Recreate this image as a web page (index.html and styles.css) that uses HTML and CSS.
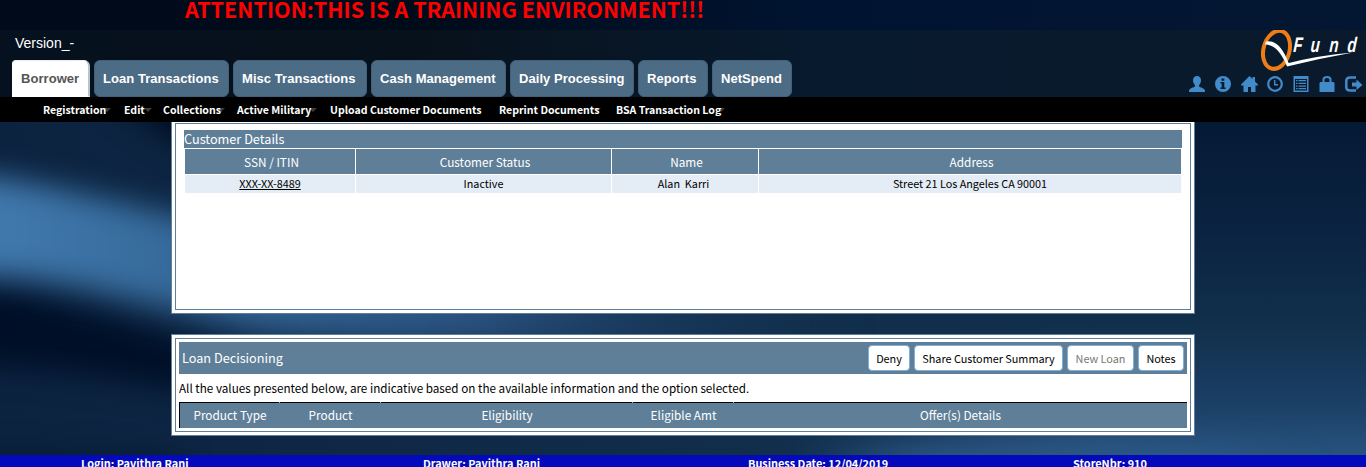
FILE: index.html
```html
<!DOCTYPE html>
<html lang="en">
<head>
<meta charset="utf-8">
<title>QFund</title>
<link rel="stylesheet" href="styles.css">
</head>
<body>
<svg class="backdrop" viewBox="0 0 1366 467" preserveAspectRatio="none" aria-hidden="true">
  <defs>
    <linearGradient id="base" x1="0" y1="0" x2="0" y2="1">
      <stop offset="0" stop-color="#021026"/><stop offset=".28" stop-color="#051a35"/>
      <stop offset=".5" stop-color="#0b2342"/><stop offset=".7" stop-color="#11304c"/>
      <stop offset=".85" stop-color="#1a3d63"/><stop offset="1" stop-color="#2a5784"/>
    </linearGradient>
    <linearGradient id="left" x1="0" y1="0" x2="1" y2="0">
      <stop offset="0" stop-color="#0c2340"/><stop offset=".7" stop-color="#112e4b"/><stop offset="1" stop-color="#112e4b" stop-opacity="0"/>
    </linearGradient>
    <linearGradient id="beam" gradientUnits="userSpaceOnUse" x1="0" y1="0" x2="860" y2="0">
      <stop offset="0" stop-color="#4079ad"/><stop offset=".2" stop-color="#366a9b"/>
      <stop offset=".55" stop-color="#2a527f"/><stop offset="1" stop-color="#16385c" stop-opacity="0"/>
    </linearGradient>
    <filter id="soft" filterUnits="userSpaceOnUse" x="-200" y="-100" width="1800" height="700" color-interpolation-filters="sRGB"><feGaussianBlur stdDeviation="15"/></filter>
    <filter id="wide" filterUnits="userSpaceOnUse" x="-200" y="-100" width="1800" height="700" color-interpolation-filters="sRGB"><feGaussianBlur stdDeviation="30 14"/></filter>
  </defs>
  <rect width="1366" height="467" fill="url(#base)"/>
  <rect y="100" width="1100" height="367" fill="url(#left)"/>
  <path d="M110 95H500V160L190 152Z" fill="#000c20" filter="url(#soft)"/>
  <path d="M-90 285L0 290C70 305 130 325 200 345L260 400L170 388C90 375 40 366 -90 362Z" fill="#000f27" filter="url(#soft)"/>
  <path d="M-90 170L0 178C80 190 220 228 420 270C560 300 720 300 900 300L900 345C600 350 360 345 260 331C150 305 70 280 0 276L-90 272Z" fill="url(#beam)" filter="url(#soft)"/>
  <path d="M-60 458H180V500H-60Z" fill="#03172e" filter="url(#soft)"/>
  <ellipse cx="1060" cy="462" rx="210" ry="20" fill="#2b5683" filter="url(#wide)"/>
</svg>
<div class="page">
  <div class="notice">ATTENTION:THIS IS A TRAINING ENVIRONMENT!!!</div>
  <header class="header">
    <div class="header-left">
      <div class="version">Version_-</div>
      <nav class="tabs">
        <a class="tab tab-active t1">Borrower</a>
        <a class="tab t2">Loan Transactions</a>
        <a class="tab t3">Misc Transactions</a>
        <a class="tab t4">Cash Management</a>
        <a class="tab t5">Daily Processing</a>
        <a class="tab t6">Reports</a>
        <a class="tab t7">NetSpend</a>
      </nav>
    </div>
    <div class="header-right">
      <svg class="logo" viewBox="0 0 105 42">
        <ellipse cx="15.500" cy="19.800" rx="13" ry="19.400" transform="rotate(15 15.500 19.800)" fill="none" stroke="#ef7d17" stroke-width="4"/>
        <path d="M5 11.500C15 9.500 23 20 27.500 33L26 36C20 23 14 14.500 4 14.500Z" fill="#fff"/>
        <path d="M25 31.500L28 33Q57 25.500 92 22.500Q58 28.500 26 36.500Z" fill="#fff"/>
        <text class="logo-text" transform="translate(32 22) skewX(-4) scale(.72 1)" x="0 24 50 75" y="0">Fund</text>
      </svg>
      <div class="icons">
        <svg viewBox="0 0 16 16"><path d="M8 0c2.500 0 4 1.800 4 4.300 0 2.300-1 4-2 5v1.300c1 1 6 1.600 6 4.400v1H0v-1c0-2.800 5-3.400 6-4.400V9.300c-1-1-2-2.700-2-5C4 1.800 5.500 0 8 0Z"/></svg>
        <svg viewBox="0 0 16 16"><path fill-rule="evenodd" d="M8 0a8 8 0 1 1 0 16A8 8 0 0 1 8 0ZM6.500 2.500v2.200h2.800V2.500ZM5.500 6v1.400h1.200V11.500H5.500V13h5v-1.500H9.300V6Z"/></svg>
        <svg class="wide-icon" viewBox="0 0 17 16"><path d="M8.500 0 11.500 3V1h2.500v4.500L17 8.500v1h-2.500V16H10v-5H7v5H2.500V9.500H0v-1Z"/></svg>
        <svg viewBox="0 0 16 16"><circle cx="8" cy="8" r="6.800" fill="none" stroke="#428bca" stroke-width="2.200"/><path d="M7 4h1.400v4H11v1.400H7Z"/></svg>
        <svg viewBox="0 0 16 16"><path fill-rule="evenodd" d="M.5 0h15v16H.5ZM2 3v11.500h12V3Z"/><path d="M3 4h1.500v1.300H3Zm2.500 0H13v1.300H5.500ZM3 6.700h1.500V8H3Zm2.500 0H13V8H5.500ZM3 9.400h1.500v1.300H3Zm2.500 0H13v1.300H5.500ZM3 12h1.500v1.300H3Zm2.500 0H13v1.300H5.500Z"/></svg>
        <svg viewBox="0 0 16 16"><path fill-rule="evenodd" d="M3.500 6V3.500Q3.500 0 8 0t4.500 3.500V6h2.200l.8 1v9H.5V7l.8-1ZM5.500 6h5V3.500Q10.500 2 8 2T5.500 3.500Z"/></svg>
        <svg class="exit-icon" viewBox="0 0 18 16"><path d="M11 1.500H5Q1.300 1.500 1.300 5v6Q1.300 14.500 5 14.500h6" fill="none" stroke="#428bca" stroke-width="2.500"/><path d="M7 6.500h4.500V3.500l6 5.500-6 5v-3.500H7Z"/></svg>
      </div>
    </div>
  </header>
  <nav class="submenu">
    <a class="s1 arrow">Registration</a>
    <a class="s2 arrow">Edit</a>
    <a class="s3 arrow">Collections</a>
    <a class="s4 arrow">Active Military</a>
    <a class="s5">Upload Customer Documents</a>
    <a class="s6 arrow">Reprint Documents</a>
    <a class="s7 arrow">BSA Transaction Log</a>
  </nav>
  <main class="content">
    <section class="card card-customer">
      <div class="card-inner">
        <h2 class="section-title">Customer Details</h2>
        <div class="grid">
          <div class="cell head">SSN / ITIN</div><div class="cell head">Customer Status</div><div class="cell head">Name</div><div class="cell head">Address</div>
          <div class="cell data"><a class="ssn">XXX-XX-8489</a></div><div class="cell data">Inactive</div><div class="cell data name">Alan&nbsp; Karri</div><div class="cell data">Street 21 Los Angeles CA 90001</div>
        </div>
      </div>
    </section>
    <section class="card card-loan">
      <div class="card-inner">
        <div class="loan-bar">
          <h2 class="loan-title">Loan Decisioning</h2>
          <div class="buttons">
            <button class="btn b1">Deny</button><button class="btn b2">Share Customer Summary</button><button class="btn b3" disabled>New Loan</button><button class="btn b4">Notes</button>
          </div>
        </div>
        <p class="hint">All the values presented below, are indicative based on the available information and the option selected.</p>
        <div class="offers">
          <div>Product Type</div><div>Product</div><div>Eligibility</div><div>Eligible Amt</div><div>Offer(s) Details</div>
        </div>
      </div>
    </section>
  </main>
  <footer class="footer">
    <span>Login: Pavithra Rani</span><span>Drawer: Pavithra Rani</span><span>Business Date: 12/04/2019</span><span>StoreNbr: 910</span>
  </footer>
</div>
</body>
</html>
```

FILE: styles.css
```css
* { box-sizing: border-box; }
html, body { margin: 0; height: 467px; overflow: hidden; background: #021026; }
body { font-family: "Noto Sans CJK SC", "Noto Sans", sans-serif; }
.backdrop { position: absolute; left: 0; top: 0; width: 1366px; height: 467px; }
.page { position: relative; width: 1366px; height: 467px; overflow: hidden; display: flex; flex-direction: column; }
h2, p { margin: 0; font-weight: 400; }
.notice { flex: 0 0 30px; padding-left: 185px; font-size: 21.550px; line-height: 18px; font-weight: 700; color: #f00; white-space: nowrap; background: linear-gradient(90deg, #010a1b, #000b19 30%, #001431 60%, #031733); }
.header { flex: 0 0 67px; display: flex; justify-content: space-between; background: linear-gradient(90deg, #06111f, #07111b 30%, #081a2e 60%, #0a1a2c); }
.header-left { padding-left: 12px; font-family: "Liberation Sans", Arial, sans-serif; }
.version { height: 30px; padding-left: 3px; color: #fff; font-size: 14px; line-height: 27px; }
.tabs { display: flex; gap: 4px; }
.tab { height: 37px; border: 1px solid #426079; border-radius: 6px; background: #4c6b85; color: #fff; font-size: 13px; font-weight: 700; line-height: 35px; padding-left: 8px; white-space: nowrap; letter-spacing: .05px; }
.tab-active { background: #fff; color: #555; border-color: #e8edf2 #b5c4d0 #fff #fff; border-right-width: 2px; border-radius: 4px 6px 0 0; }
.t1 { width: 78px; } .t2 { width: 135px; } .t3 { width: 134px; } .t4 { width: 135px; } .t5 { width: 124px; } .t6 { width: 70px; } .t7 { width: 80px; }
.header-right { width: 178px; display: flex; flex-direction: column; align-items: flex-end; }
.logo { width: 105px; height: 42px; display: block; }
.logo-text { fill: #fff; font: italic 700 21px "Liberation Sans", Arial, sans-serif; }
.icons { display: flex; justify-content: space-between; width: 174px; height: 16px; margin: 4px 3px 0 0; }
.icons svg { width: 16px; height: 16px; fill: #428bca; }
.icons .wide-icon { width: 17px; }
.icons .exit-icon { width: 18px; }
.submenu { position: relative; z-index: 0; flex: 0 0 25px; display: flex; background: #000; color: #fff; font-size: 10.550px; line-height: 25px; font-weight: 700; padding-left: 43px; }
.submenu a { position: relative; white-space: nowrap; }
.s1 { width: 81px; } .s2 { width: 39px; } .s3 { width: 74px; } .s4 { width: 93px; } .s5 { width: 169px; } .s6 { width: 117px; } .s7 { width: 109px; }
.arrow::after { content: ""; position: absolute; z-index: -1; top: 11px; border: 4px solid transparent; border-top-color: #3c3c3c; border-bottom: 0; right: 13px; }
.s2::after { right: 11px; } .s3::after { right: 12px; } .s6::after { right: 15px; } .s7::after { right: 0; }
.content { width: 1024px; margin-left: 171px; flex: 0 0 333px; }
.card { background: #fff; border: 1px solid #5f7f99; padding: 3px; }
.card-inner { border: 1px solid #5f7f99; }
.card-customer { height: 192px; border-top: 0; padding-top: 1px; }
.card-customer .card-inner { height: 187px; padding: 6px 8px; }
.section-title { height: 18px; background: #5f7f99; color: #fff; font-size: 12.700px; line-height: 18px; }
.grid { display: grid; grid-template-columns: 170px 255px 146px 422px; grid-template-rows: 25px 18px; gap: 1px; margin: 1px 1px 0; }
.cell { text-align: center; white-space: nowrap; }
.head { background: #5f7f99; color: #fff; font-size: 11.800px; line-height: 25px; padding-left: 3px; }
.data { background: #e4edf5; color: #000; font-size: 10.800px; line-height: 17px; }
.name { padding-right: 3px; }
.ssn { text-decoration: underline; }
.card-loan { height: 102px; margin-top: 20px; }
.card-loan .card-inner { height: 94px; padding: 3px; }
.loan-bar { height: 32px; background: #5f7f99; display: flex; justify-content: space-between; padding: 3px; }
.loan-title { color: #fff; font-size: 12.700px; line-height: 26px; }
.buttons { display: flex; gap: 4px; }
.btn { height: 26px; padding: 0; border: 1px solid #7fb0da; border-radius: 4px; background: #fff; color: #000; font: 400 10.850px/22px "Noto Sans CJK SC", sans-serif; white-space: nowrap; }
.btn:disabled { color: #777; }
.b1 { width: 42px; } .b2 { width: 149px; } .b3 { width: 67px; } .b4 { width: 46px; }
.hint { height: 28px; font-size: 11.700px; line-height: 27px; color: #000; white-space: nowrap; }
.offers { display: grid; grid-template-columns: 100px 101px 252px 101px 1fr; height: 26px; background: #5f7f99; border-top: 1px solid #000; border-left: 1px solid #000; color: #fff; font-size: 11.800px; line-height: 23px; text-align: center; }
.offers div { position: relative; }
.offers div + div::before { content: ""; position: absolute; left: -1px; top: -1px; width: 1px; height: 1px; background: #8fa6b8; }
.footer { flex: 0 0 12px; overflow: hidden; background: #040abc; color: #fff; font-size: 10.900px; font-weight: 700; line-height: 17px; display: grid; grid-template-columns: 342px 325px 325px 1fr; padding-left: 81px; white-space: nowrap; }
```
